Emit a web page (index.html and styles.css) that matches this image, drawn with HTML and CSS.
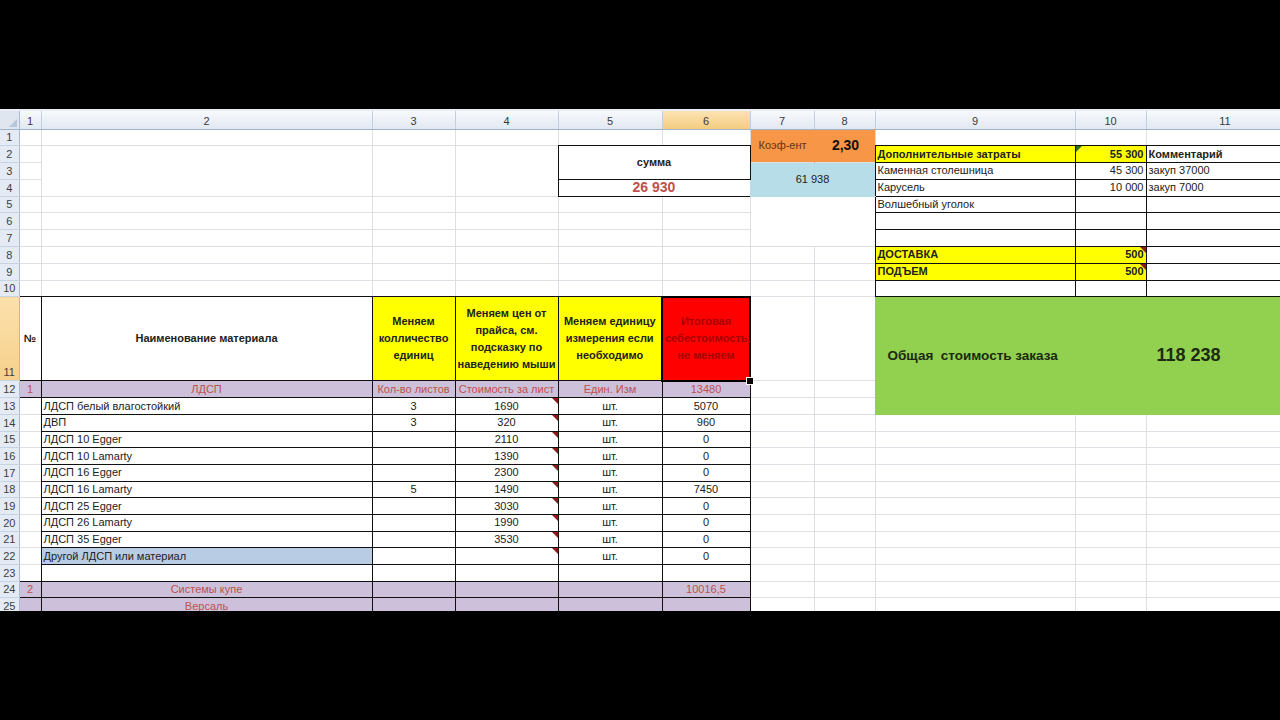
FILE: index.html
```html
<!DOCTYPE html>
<html lang="ru">
<head>
<meta charset="utf-8">
<title>Смета</title>
<link rel="stylesheet" href="styles.css">
</head>
<body>
<div class="screen">
<div class="sheet">
<table class="grid">
<colgroup>
<col class="w0 hcol"><col class="w1"><col class="w2"><col class="w3"><col class="w4"><col class="w5"><col class="w6"><col class="w7"><col class="w8"><col class="w9"><col class="w10"><col class="w11">
</colgroup>
<thead>
<tr class="hdr">
<th class="corner"></th><th>1</th><th>2</th><th>3</th><th>4</th><th>5</th><th class="hsel">6</th><th>7</th><th>8</th><th>9</th><th>10</th><th class="hlast">11</th>
</tr>
</thead>
<tbody>
<tr class="r">
<td class="rh">1</td>
<td></td><td></td><td></td><td></td><td></td><td></td>
<td class="koef" rowspan="2">Коэф-ент</td>
<td class="koefv" rowspan="2">2,30</td>
<td></td><td></td><td></td>
</tr>
<tr class="r">
<td class="rh">2</td>
<td></td>
<td rowspan="3"></td><td rowspan="3"></td><td rowspan="3"></td>
<td class="bx c b sumlbl" colspan="2" rowspan="2">сумма</td>
<td class="bx y b">Дополнительные затраты</td>
<td class="bx y b ra note-g">55 300</td>
<td class="bx b">Комментарий</td>
</tr>
<tr class="r">
<td class="rh">3</td>
<td></td>
<td class="aqua c" colspan="2" rowspan="2">61 938</td>
<td class="bx">Каменная столешница</td>
<td class="bx ra">45 300</td>
<td class="bx">закуп 37000</td>
</tr>
<tr class="r">
<td class="rh">4</td>
<td></td>
<td class="bx c total" colspan="2">26 930</td>
<td class="bx">Карусель</td>
<td class="bx ra">10 000</td>
<td class="bx">закуп 7000</td>
</tr>
<tr class="r">
<td class="rh">5</td>
<td></td><td></td><td></td><td></td><td></td><td></td>
<td class="blank" colspan="2" rowspan="3"></td>
<td class="bx">Волшебный уголок</td><td class="bx"></td><td class="bx"></td>
</tr>
<tr class="r">
<td class="rh">6</td>
<td></td><td></td><td></td><td></td><td></td><td></td>
<td class="bx"></td><td class="bx"></td><td class="bx"></td>
</tr>
<tr class="r">
<td class="rh">7</td>
<td></td><td></td><td></td><td></td><td></td><td></td>
<td class="bx"></td><td class="bx"></td><td class="bx"></td>
</tr>
<tr class="r">
<td class="rh">8</td>
<td></td><td></td><td></td><td></td><td></td><td></td><td></td><td></td>
<td class="bx y b">ДОСТАВКА</td><td class="bx y b ra note">500</td><td class="bx"></td>
</tr>
<tr class="r">
<td class="rh">9</td>
<td></td><td></td><td></td><td></td><td></td><td></td><td></td><td></td>
<td class="bx y b">ПОДЪЕМ</td><td class="bx y b ra note">500</td><td class="bx"></td>
</tr>
<tr class="r">
<td class="rh">10</td>
<td></td><td></td><td></td><td></td><td></td><td></td><td></td><td></td>
<td class="bx"></td><td class="bx"></td><td class="bx"></td>
</tr>
<tr class="tall">
<td class="rh rsel">11</td>
<td class="bx c b">№</td>
<td class="bx c b">Наименование материала</td>
<td class="bx y c b wrap">Меняем<br>колличество<br>единиц</td>
<td class="bx y c b wrap">Меняем цен от<br>прайса, см.<br>подсказку по<br>наведению мыши</td>
<td class="bx y c b wrap">Меняем единицу<br>измерения если<br>необходимо</td>
<td class="red c b wrap selcell">Итоговая<br>себестоимость,<br>не меняем</td>
<td></td><td></td>
<td class="green" colspan="3" rowspan="3"><div class="totalbox"><span class="tlabel">Общая  стоимость заказа</span><span class="tval">118 238</span></div></td>
</tr>
<tr class="s">
<td class="rh">12</td>
<td class="bx pu c">1</td>
<td class="bx pu c">ЛДСП</td>
<td class="bx pu c">Кол-во листов</td>
<td class="bx pu c">Стоимость за лист</td>
<td class="bx pu c">Един. Изм</td>
<td class="bx pu c">13480</td>
<td></td><td></td>
</tr>
<tr class="s">
<td class="rh">13</td>
<td></td>
<td class="bx">ЛДСП белый влагостойкий</td>
<td class="bx c">3</td><td class="bx c note">1690</td><td class="bx c">шт.</td><td class="bx c">5070</td>
<td></td><td></td>
</tr>
<tr class="s">
<td class="rh">14</td>
<td></td>
<td class="bx">ДВП</td>
<td class="bx c">3</td><td class="bx c note">320</td><td class="bx c">шт.</td><td class="bx c">960</td>
<td></td><td></td><td></td><td></td><td></td>
</tr>
<tr class="s">
<td class="rh">15</td>
<td></td>
<td class="bx">ЛДСП 10 Egger</td>
<td class="bx c"></td><td class="bx c note">2110</td><td class="bx c">шт.</td><td class="bx c">0</td>
<td></td><td></td><td></td><td></td><td></td>
</tr>
<tr class="s">
<td class="rh">16</td>
<td></td>
<td class="bx">ЛДСП 10 Lamarty</td>
<td class="bx c"></td><td class="bx c note">1390</td><td class="bx c">шт.</td><td class="bx c">0</td>
<td></td><td></td><td></td><td></td><td></td>
</tr>
<tr class="s">
<td class="rh">17</td>
<td></td>
<td class="bx">ЛДСП 16 Egger</td>
<td class="bx c"></td><td class="bx c note">2300</td><td class="bx c">шт.</td><td class="bx c">0</td>
<td></td><td></td><td></td><td></td><td></td>
</tr>
<tr class="s">
<td class="rh">18</td>
<td></td>
<td class="bx">ЛДСП 16 Lamarty</td>
<td class="bx c">5</td><td class="bx c note">1490</td><td class="bx c">шт.</td><td class="bx c">7450</td>
<td></td><td></td><td></td><td></td><td></td>
</tr>
<tr class="s">
<td class="rh">19</td>
<td></td>
<td class="bx">ЛДСП 25 Egger</td>
<td class="bx c"></td><td class="bx c note">3030</td><td class="bx c">шт.</td><td class="bx c">0</td>
<td></td><td></td><td></td><td></td><td></td>
</tr>
<tr class="s">
<td class="rh">20</td>
<td></td>
<td class="bx">ЛДСП 26 Lamarty</td>
<td class="bx c"></td><td class="bx c note">1990</td><td class="bx c">шт.</td><td class="bx c">0</td>
<td></td><td></td><td></td><td></td><td></td>
</tr>
<tr class="s">
<td class="rh">21</td>
<td></td>
<td class="bx">ЛДСП 35 Egger</td>
<td class="bx c"></td><td class="bx c note">3530</td><td class="bx c">шт.</td><td class="bx c">0</td>
<td></td><td></td><td></td><td></td><td></td>
</tr>
<tr class="s">
<td class="rh">22</td>
<td></td>
<td class="bx lb">Другой ЛДСП или материал</td>
<td class="bx c"></td><td class="bx c note"></td><td class="bx c">шт.</td><td class="bx c">0</td>
<td></td><td></td><td></td><td></td><td></td>
</tr>
<tr class="s">
<td class="rh">23</td>
<td></td>
<td class="bx"></td>
<td class="bx"></td><td class="bx"></td><td class="bx"></td><td class="bx"></td>
<td></td><td></td><td></td><td></td><td></td>
</tr>
<tr class="s">
<td class="rh">24</td>
<td class="bx pu c">2</td>
<td class="bx pu c">Системы купе</td>
<td class="bx pu"></td><td class="bx pu"></td><td class="bx pu"></td><td class="bx pu c">10016,5</td>
<td></td><td></td><td></td><td></td><td></td>
</tr>
<tr class="s">
<td class="rh">25</td>
<td class="bx pu"></td>
<td class="bx pu c">Версаль</td>
<td class="bx pu"></td><td class="bx pu"></td><td class="bx pu"></td><td class="bx pu"></td>
<td></td><td></td><td></td><td></td><td></td>
</tr>
</tbody>
</table>
</div>
</div>
</body>
</html>
```
FILE: styles.css
```css
* { box-sizing: border-box; }
html, body { margin: 0; padding: 0; background: #000; }
body {
  width: 1280px;
  height: 720px;
  overflow: hidden;
  font-family: "Liberation Sans", Arial, sans-serif;
}
.screen { padding-top: 109px; }
.sheet {
  width: 1280px;
  height: 502px;
  overflow: hidden;
  background: #fff;
}
.grid {
  border-collapse: collapse;
  table-layout: fixed;
  width: 1280px;
  font-size: 11px;
  color: #222;
}
.w0 { width: 19px; }
.w1 { width: 22px; }
.w2 { width: 331px; }
.w3 { width: 83px; }
.w4 { width: 103px; }
.w5 { width: 104px; }
.w6 { width: 88px; }
.w7 { width: 64px; }
.w8 { width: 61px; }
.w9 { width: 200px; }
.w10 { width: 71px; }
.w11 { width: 134px; }

.grid col { border-right: 1px solid #dcdfe4; }
.grid col.hcol { border-right: 1px solid #a9bcd2; }
.grid tbody tr { border-bottom: 1px solid #dcdfe4; }

.hdr { height: 19px; }
.hdr th {
  font-weight: normal;
  color: #3a3a3a;
  font-size: 11px;
  padding: 2px 0 0;
  text-align: center;
  background: linear-gradient(#f7f9fc, #e1e8f2);
  border-top: 2px solid #e9eef5;
  border-right: 1px solid #c2cfdf;
  border-bottom: 1px solid #9fb4cc;
}
.hdr th.hlast { padding-left: 24px; }
.hdr th.hsel { background: linear-gradient(#fbe3b3, #f4cc80); }
.hdr th.corner {
  position: relative;
  background: #dfe6ef;
  border-right: 1px solid #a9bcd2;
}
.hdr th.corner::after {
  content: "";
  position: absolute;
  right: 2px;
  bottom: 2px;
  width: 0;
  height: 0;
  border-bottom: 8px solid #b7c7da;
  border-left: 8px solid transparent;
}

.r { height: 16.8px; }
.tall { height: 84px; }
.s { height: 16.7px; }

.grid td {
  padding: 0 2px;
  white-space: nowrap;
  overflow: hidden;
  vertical-align: middle;
  line-height: 13px;
}
.grid td.rh {
  background: #e4ebf5;
  color: #3e3e3e;
  text-align: center;
  padding: 0;
  vertical-align: bottom;
  line-height: 15px;
  border-right: 1px solid #a9bcd2;
  border-bottom: 1px solid #c7d3e2;
}
.grid td.rsel { background: linear-gradient(#fbe0ab, #f6d08c); }

.c { text-align: center; }
.ra { text-align: right; }
.b { font-weight: bold; }
.bx { border: 1px solid #111; }
.y { background: #ffff00; }
.pu { background: #ccc0da; color: #c0504d; }
.lb { background: #b8cce4; }
.red { background: #ff0000; color: #a80000; }

.grid td.wrap { white-space: normal; line-height: 17px; }

.grid td.koef {
  background: #f79646;
  color: #6b2f12;
  padding-left: 8px;
  border-right: 1px solid #f79646;
}
.grid td.koefv {
  background: #f79646;
  color: #111;
  font-weight: bold;
  font-size: 14px;
  text-align: center;
  padding-left: 4px;
}
.grid td.aqua {
  background: #b7dee8;
  border-bottom: 1px solid #b7dee8;
  border-left: 1px solid #b7dee8;
}
.grid td.sumlbl { border-bottom: 1px solid #111; }
.grid td.total {
  color: #c0504d;
  font-size: 14px;
  font-weight: bold;
}

.grid td.selcell {
  position: relative;
  overflow: visible;
  border: 2px solid #000;
}
.grid td.selcell::after {
  content: "";
  position: absolute;
  right: -5px;
  bottom: -5px;
  width: 6px;
  height: 6px;
  background: #000;
  border: 1px solid #fff;
}

.grid td.green {
  background: #92d050;
  border-left: 1px solid #92d050;
  border-bottom: 1px solid #92d050;
  padding: 0;
}
.totalbox {
  display: flex;
  align-items: center;
  color: #1b2a10;
  font-weight: bold;
}
.tlabel {
  white-space: pre;
  font-size: 13.5px;
  padding-left: 12px;
  width: 281px;
}
.tval { font-size: 18px; }

.note, .note-g { position: relative; }
.note::after {
  content: "";
  position: absolute;
  top: 0;
  right: 0;
  width: 0;
  height: 0;
  border-top: 6px solid #8e1a1a;
  border-left: 6px solid transparent;
}
.note-g::after {
  content: "";
  position: absolute;
  top: 0;
  left: 0;
  width: 0;
  height: 0;
  border-top: 6px solid #2f6b2f;
  border-right: 6px solid transparent;
}
```
